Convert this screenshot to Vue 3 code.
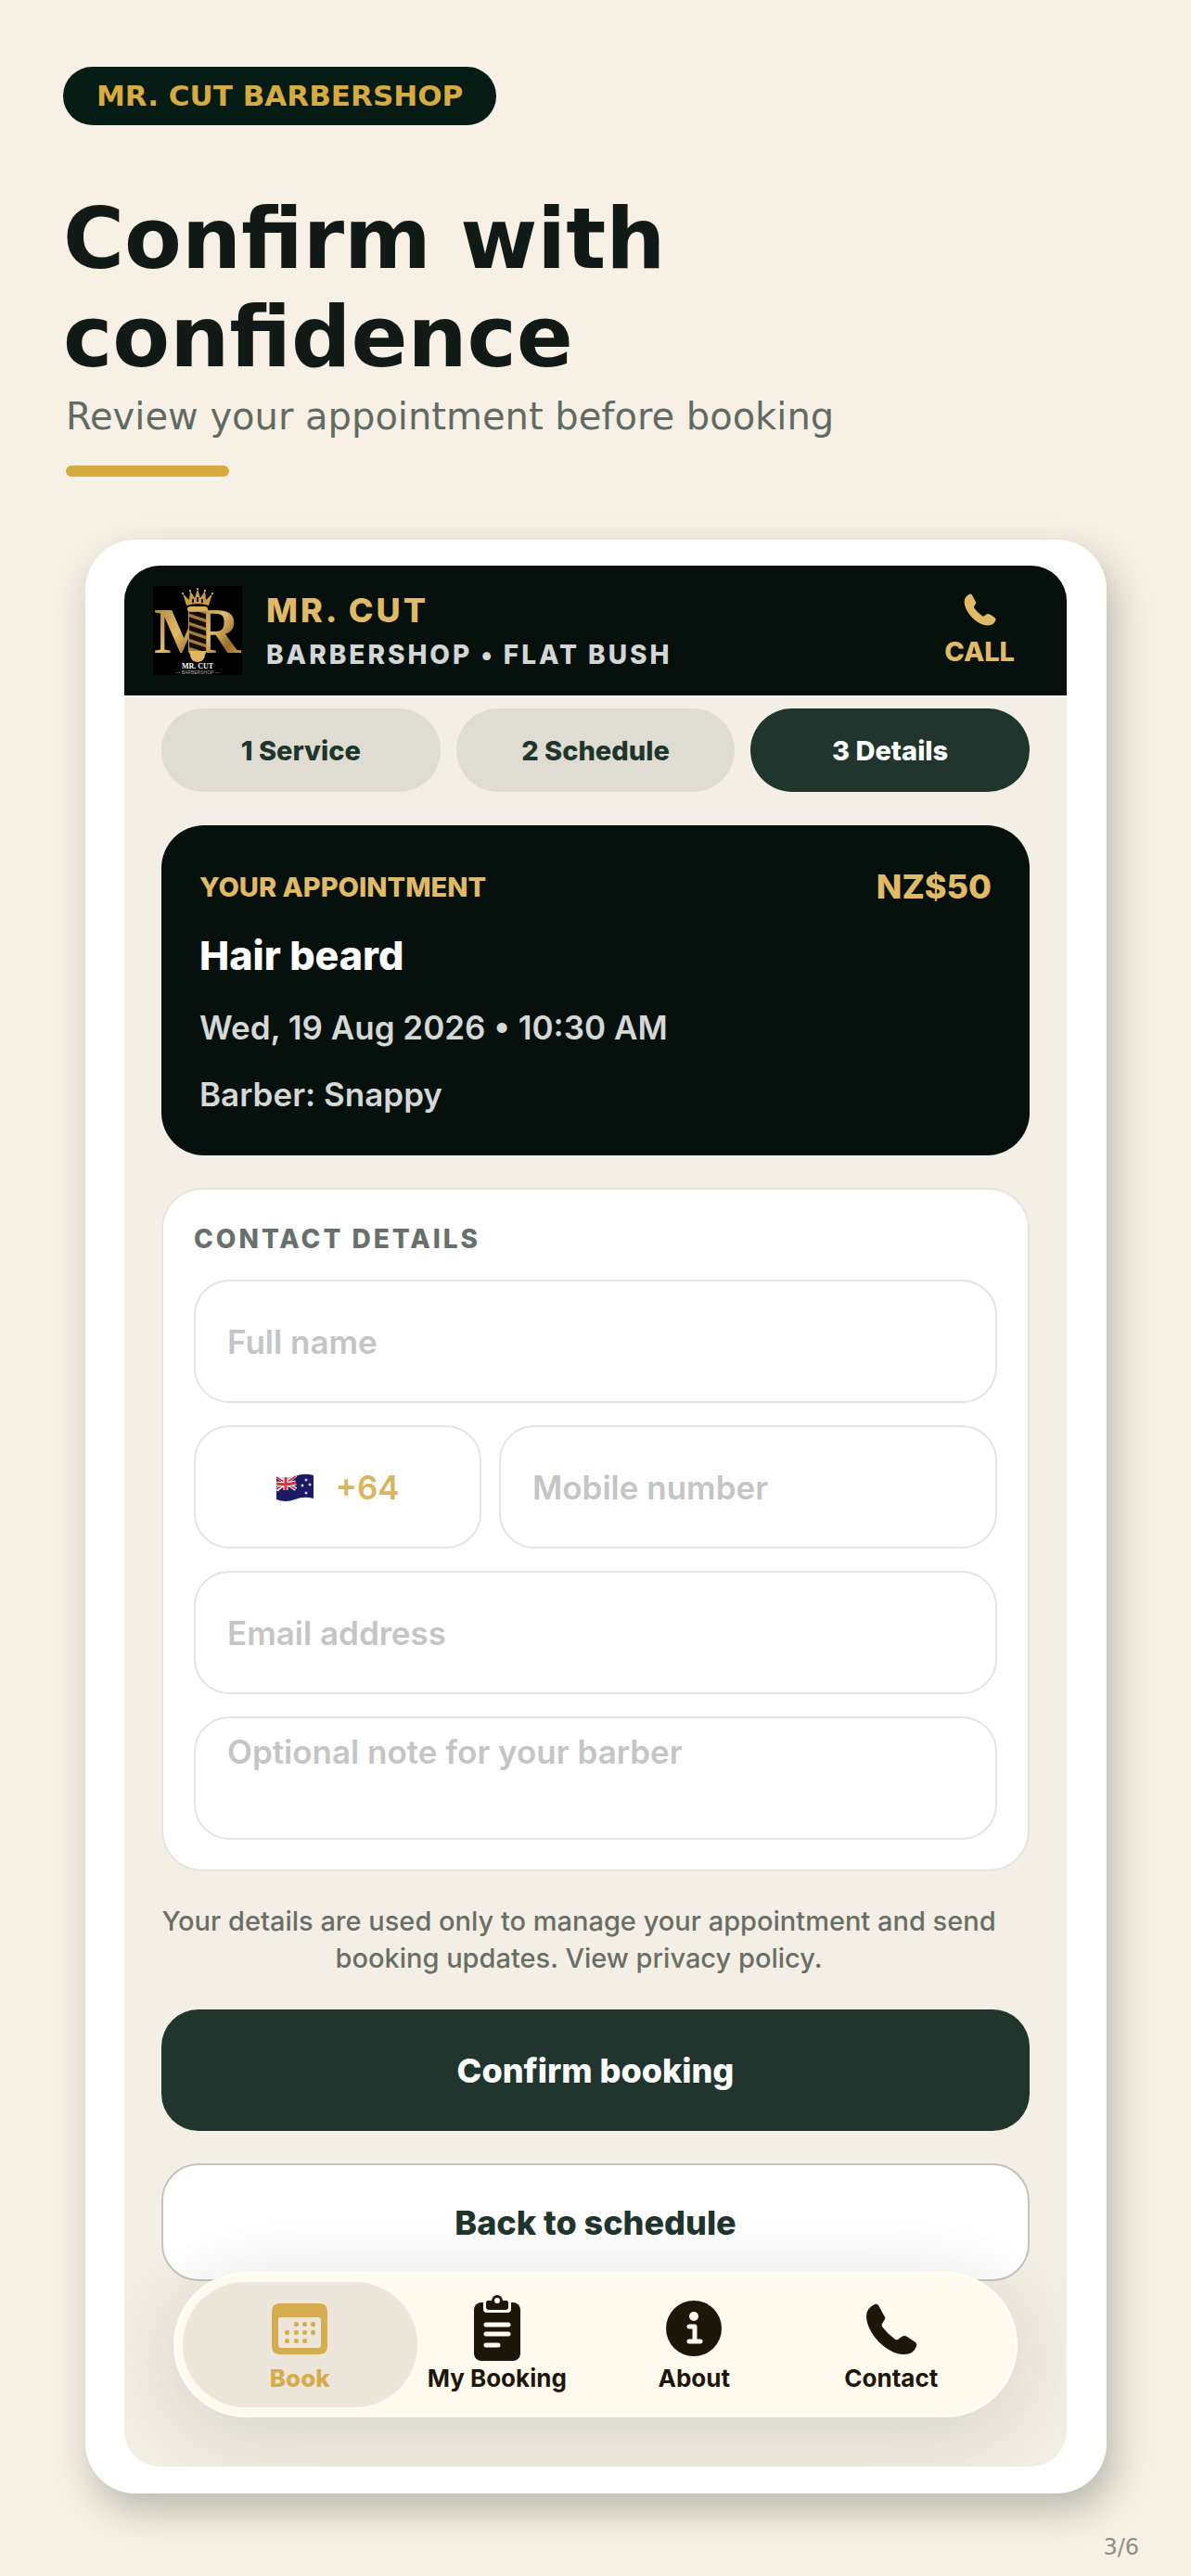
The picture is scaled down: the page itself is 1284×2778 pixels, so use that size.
<script setup>
import { ref } from 'vue';

// Booking progress
const steps = ['1 Service', '2 Schedule', '3 Details'];
const activeStep = ref('3 Details');

// Appointment summary
const appointment = {
  service: 'Hair beard',
  price: 'NZ$50',
  when: 'Wed, 19 Aug 2026 • 10:30 AM',
  barber: 'Snappy',
};

// Contact form
const fullName = ref('');
const mobile = ref('');
const email = ref('');
const note = ref('');

// Bottom tabs
const activeTab = ref('book');
const tabs = [
  { id: 'book', label: 'Book' },
  { id: 'bookings', label: 'My Booking' },
  { id: 'about', label: 'About' },
  { id: 'contact', label: 'Contact' },
];

// Dots of the calendar icon
const calendarDots = [
  [26, 23], [35, 23], [44, 23],
  [16, 32], [26, 32], [35, 32], [44, 32],
  [16, 41], [26, 41], [35, 41],
];
</script>

<template>
  <main class="page">
    <header class="intro">
      <p class="badge">MR. CUT BARBERSHOP</p>
      <h1 class="title">Confirm with<br />confidence</h1>
      <p class="subtitle">Review your appointment before booking</p>
      <div class="accent"></div>
    </header>

    <section class="frame">
      <div class="screen">
        <header class="topbar">
          <svg class="logo" viewBox="0 0 96 96" aria-hidden="true">
            <defs>
              <linearGradient id="gold" x1="0" y1="0" x2="1" y2="1">
                <stop offset="0" stop-color="#a87b33" />
                <stop offset="0.45" stop-color="#e0bb69" />
                <stop offset="0.7" stop-color="#9a6f2c" />
                <stop offset="1" stop-color="#dcae55" />
              </linearGradient>
              <clipPath id="left-half"><rect x="0" y="0" width="40" height="96" /></clipPath>
              <clipPath id="right-half"><rect x="58" y="0" width="38" height="96" /></clipPath>
              <clipPath id="pole"><rect x="39" y="28" width="18" height="42" /></clipPath>
            </defs>
            <rect width="96" height="96" fill="#000" />
            <g fill="url(#gold)" class="logo-letters">
              <text x="1" y="72" clip-path="url(#left-half)">M</text>
              <text x="44" y="72" clip-path="url(#right-half)">R</text>
            </g>
            <path d="M36 21 32 8l7 7 1-10 5 8 3-10 3 10 5-8 1 10 7-7-4 13q-12-4-24 0Z" fill="#c99c48" />
            <g fill="#efd28a">
              <circle cx="32" cy="8" r="1" /><circle cx="40" cy="5" r="1" /><circle cx="48" cy="3" r="1" />
              <circle cx="56" cy="5" r="1" /><circle cx="64" cy="8" r="1" />
            </g>
            <path d="M43 14v4M48 12v5M53 14v4" stroke="#1a1206" stroke-width="2" />
            <rect x="37" y="22" width="22" height="6" rx="3" fill="#d9ad59" />
            <rect x="38" y="27" width="20" height="44" fill="#c0913f" />
            <g clip-path="url(#pole)">
              <rect x="39" y="28" width="18" height="42" fill="#a57c3a" />
              <path d="m36 26 24 8m-24 1 24 8m-24 1 24 8m-24 1 24 8m-24 1 24 8" stroke="#120d05" stroke-width="5" />
            </g>
            <path d="M38 70h20l-2 4q0 7-8 8-8-1-8-8Z" fill="#e0b663" />
            <text x="48" y="89" class="logo-name">MR. CUT</text>
            <text x="48" y="95" class="logo-sub">— BARBERSHOP —</text>
          </svg>
          <div class="brand">
            <strong class="brand-name">MR. CUT</strong>
            <span class="brand-place">BARBERSHOP • FLAT BUSH</span>
          </div>
          <a class="call" href="#call">
            <svg class="call-icon" viewBox="0 0 56 56" aria-hidden="true">
              <path d="M10 1q-9 4-9 13C1 32 24 56 42 55q10 0 13-9 1-2-1-4L45 36q-3-2-6 0l-4 3q-2 1-4-1-8-6-13-13-1-2 0-3l3-5q1-2-1-4L14 2q-2-2-4-1Z" fill="currentColor" />
            </svg>
            CALL
          </a>
        </header>

        <div class="content">
          <nav class="steps" aria-label="Booking steps">
            <button
              v-for="step in steps"
              :key="step"
              type="button"
              class="step"
              :class="{ active: step === activeStep }"
              @click="activeStep = step"
            >
              {{ step }}
            </button>
          </nav>

          <article class="summary">
            <div class="summary-head">
              <h2 class="summary-label">YOUR APPOINTMENT</h2>
              <span class="price">{{ appointment.price }}</span>
            </div>
            <h3 class="service">{{ appointment.service }}</h3>
            <p class="summary-line">{{ appointment.when }}</p>
            <p class="summary-line">Barber: {{ appointment.barber }}</p>
          </article>

          <form class="contact" @submit.prevent>
            <h2 class="contact-title">CONTACT DETAILS</h2>
            <input v-model="fullName" class="field" type="text" aria-label="Full name" placeholder="Full name" />
            <div class="phone-row">
              <button type="button" class="field country" aria-label="Country code +64">
                <svg class="flag" viewBox="0 0 42 30" aria-hidden="true">
                  <path d="M1 3q10 4 20 0T41 2v25q-10-3-20 1T1 28Z" fill="#1b1c66" />
                  <path d="m1 3 21 14M1 18 22 2" stroke="#fff" stroke-width="4" />
                  <path d="m1 4 21 13M1 17 22 3" stroke="#d8303c" stroke-width="2" />
                  <path d="M11 4v14M1 11q10 2 21-1" stroke="#fff" stroke-width="5" fill="none" />
                  <path d="M11 4v14M1 11q10 2 21-1" stroke="#d8303c" stroke-width="3" fill="none" />
                  <g fill="#e06a78" stroke="#fff" stroke-width="1">
                    <circle cx="33" cy="7" r="1" /><circle cx="29" cy="13" r="1" />
                    <circle cx="37" cy="12" r="1" /><circle cx="33" cy="21" r="1" />
                  </g>
                </svg>
                +64
              </button>
              <input v-model="mobile" class="field" type="tel" aria-label="Mobile number" placeholder="Mobile number" />
            </div>
            <input v-model="email" class="field" type="email" aria-label="Email address" placeholder="Email address" />
            <textarea v-model="note" class="field note" aria-label="Optional note for your barber" placeholder="Optional note for your barber"></textarea>
          </form>

          <p class="privacy">
            Your details are used only to manage your appointment and send
            booking updates. <a href="#privacy">View privacy policy.</a>
          </p>

          <button type="button" class="action primary">Confirm booking</button>
          <button type="button" class="action secondary">Back to schedule</button>
        </div>

        <nav class="tabbar" aria-label="Main">
          <a
            v-for="tab in tabs"
            :key="tab.id"
            :href="'#' + tab.id"
            class="tab"
            :class="{ active: tab.id === activeTab }"
            @click="activeTab = tab.id"
          >
            <svg v-if="tab.id === 'book'" class="tab-icon" viewBox="0 0 60 72" aria-hidden="true">
              <path
                fill="currentColor"
                fill-rule="evenodd"
                d="M9 9h42q9 0 9 9v37q0 9-9 9H9q-9 0-9-9V18q0-9 9-9Zm1 15q-3 0-3 3v27q0 3 3 3h40q3 0 3-3V27q0-3-3-3Z"
              />
              <rect
                v-for="([x, y], i) in calendarDots"
                :key="i"
                :x="x - 2"
                :y="y + 6"
                width="5"
                height="5"
                rx="2"
                fill="currentColor"
              />
            </svg>
            <svg v-else-if="tab.id === 'bookings'" class="tab-icon" viewBox="0 0 60 72" aria-hidden="true">
              <rect x="5" y="8" width="50" height="63" rx="8" fill="currentColor" />
              <path d="M15 4h30v11q0 4-4 4H19q-4 0-4-4Z" fill="#fffaee" />
              <path d="M20 6h4q1-6 6-6t6 6h4q2 0 2 3v4q0 3-3 3H21q-3 0-3-3V9q0-3 2-3Z" fill="currentColor" />
              <circle cx="30" cy="6" r="3" fill="#fffaee" />
              <path d="M18 32h24M18 42h24M18 54h13" stroke="#fffaee" stroke-width="5" stroke-linecap="round" />
            </svg>
            <svg v-else-if="tab.id === 'about'" class="tab-icon" viewBox="0 0 60 72" aria-hidden="true">
              <circle cx="30" cy="36" r="30" fill="currentColor" />
              <circle cx="30" cy="23" r="5" fill="#fffaee" />
              <path d="M25 34h6v16M25 50h12" fill="none" stroke="#fffaee" stroke-width="5" stroke-linecap="round" stroke-linejoin="round" />
            </svg>
            <svg v-else class="tab-icon" viewBox="0 0 60 72" aria-hidden="true">
              <g transform="translate(2 9)">
                <path d="M10 1q-9 4-9 13C1 32 24 56 42 55q10 0 13-9 1-2-1-4L45 36q-3-2-6 0l-4 3q-2 1-4-1-8-6-13-13-1-2 0-3l3-5q1-2-1-4L14 2q-2-2-4-1Z" fill="currentColor" />
              </g>
            </svg>
            {{ tab.label }}
          </a>
        </nav>
      </div>
    </section>

    <footer class="pager">3/6</footer>
  </main>
</template>

<style>
body {
  margin: 0;
  background: #f7f0e4;
}
</style>

<style scoped>
* {
  box-sizing: border-box;
}

h1,
h2,
h3,
p {
  margin: 0;
}

button {
  cursor: pointer;
}

.page {
  display: flex;
  flex-direction: column;
  min-height: 100vh;
  background: #f7f0e4;
  font-family: 'DejaVu Sans', sans-serif;
}

/* Heading block */
.intro {
  display: flex;
  flex-direction: column;
  align-items: flex-start;
  padding: 72px 68px 68px;
}

.badge {
  padding: 0 36px;
  border-radius: 32px;
  background: #041c14;
  color: #d8aa42;
  font-size: 31px;
  font-weight: bold;
  line-height: 63px;
}

.title {
  margin-top: 70px;
  color: #121a17;
  font-size: 90px;
  font-weight: bold;
  line-height: 106px;
}

.subtitle {
  margin: 4px 0 0 3px;
  color: #626a64;
  font-size: 40px;
  line-height: 56px;
}

.accent {
  width: 176px;
  height: 12px;
  margin: 25px 0 0 3px;
  border-radius: 6px;
  background: #d8aa42;
}

/* Device frame */
.frame {
  margin: 0 91px 0 92px;
  padding: 28px 43px 29px 42px;
  border-radius: 54px;
  background: #fff;
  box-shadow: 8px 18px 40px rgba(4, 28, 20, 0.26);
}

.screen {
  position: relative;
  overflow: hidden;
  border-radius: 38px;
  background: #f4efe4;
  font-family: Inter, 'Liberation Sans', sans-serif;
}

.topbar {
  display: flex;
  align-items: center;
  gap: 26px;
  height: 142px;
  padding: 0 56px 0 31px;
  border-bottom: 2px solid #fff;
  background: #06100c;
}

.logo {
  flex: none;
  width: 96px;
  height: 96px;
}

.logo-letters {
  font-family: 'Liberation Serif', serif;
  font-size: 70px;
  font-weight: bold;
}

.logo-name {
  fill: #fff;
  font-family: 'Liberation Serif', serif;
  font-size: 8px;
  font-weight: bold;
  text-anchor: middle;
}

.logo-sub {
  fill: #aaa;
  font-family: 'Liberation Sans', sans-serif;
  font-size: 5px;
  text-anchor: middle;
}

.brand {
  display: flex;
  flex: 1;
  flex-direction: column;
  gap: 6px;
  padding-top: 2px;
}

.brand-name {
  color: #e0ba66;
  font-size: 36px;
  font-weight: 800;
  line-height: 44px;
  letter-spacing: 3px;
}

.brand-place {
  color: #d3d6d5;
  font-size: 28px;
  font-weight: 800;
  line-height: 40px;
  letter-spacing: 3px;
}

.call {
  display: flex;
  flex-direction: column;
  align-items: center;
  gap: 10px;
  color: #e0ba66;
  font-size: 29px;
  font-weight: 800;
  line-height: 36px;
  text-decoration: none;
}

.call-icon {
  width: 35px;
  height: 35px;
}

.content {
  display: flex;
  flex-direction: column;
  padding: 12px 40px 200px;
}

.steps {
  display: grid;
  grid-template-columns: repeat(3, 1fr);
  gap: 17px;
}

.step {
  height: 90px;
  padding: 0;
  border: none;
  border-radius: 45px;
  background: #dfddd1;
  color: #20352d;
  font-family: inherit;
  font-size: 29px;
  font-weight: 800;
}

.step.active {
  background: #1f352d;
  color: #fff;
}

.summary {
  margin-top: 36px;
  padding: 44px 41px;
  border-radius: 46px;
  background: #06100c;
}

.summary-head {
  display: flex;
  align-items: center;
  justify-content: space-between;
  height: 44px;
  color: #e0ba66;
}

.summary-label {
  font-size: 29px;
  font-weight: 800;
}

.price {
  font-size: 36px;
  font-weight: 800;
}

.service {
  margin-top: 24px;
  color: #fff;
  font-size: 43px;
  font-weight: 800;
  line-height: 56px;
}

.summary-line {
  margin-top: 28px;
  color: #d5d8d6;
  font-size: 35px;
  font-weight: 600;
  line-height: 44px;
}

.contact {
  display: flex;
  flex-direction: column;
  gap: 24px;
  margin-top: 35px;
  padding: 33px 33px 32px;
  border: 2px solid #e7e4de;
  border-radius: 44px;
  background: #fff;
}

.contact-title {
  color: #68706c;
  font-size: 28px;
  font-weight: 800;
  line-height: 40px;
  letter-spacing: 3px;
}

.field {
  width: 100%;
  min-width: 0;
  height: 133px;
  padding: 0 34px;
  border: 2px solid #e4e4e4;
  border-radius: 38px;
  outline: none;
  background: #fff;
  color: #121a17;
  font-family: inherit;
  font-size: 35px;
  font-weight: 600;
  line-height: 44px;
}

.field::placeholder {
  color: #c5c5c6;
  opacity: 1;
}

.note {
  display: block;
  padding-top: 14px;
  resize: none;
}

.phone-row {
  display: grid;
  grid-template-columns: 310fr 537fr;
  gap: 19px;
}

.country {
  display: flex;
  align-items: center;
  justify-content: center;
  gap: 22px;
  color: #d9b560;
}

.flag {
  width: 42px;
  height: 30px;
}

.privacy {
  margin: 34px 36px 0 0;
  color: #696e67;
  font-size: 29px;
  font-weight: 500;
  line-height: 40px;
  text-align: center;
}

.privacy a {
  color: inherit;
  text-decoration: none;
}

.action {
  height: 131px;
  border: none;
  border-radius: 40px;
  font-family: inherit;
  font-size: 36px;
  font-weight: 800;
}

.primary {
  margin-top: 35px;
  background: #1f352d;
  color: #fff;
}

.secondary {
  height: 127px;
  margin-top: 35px;
  border: 2px solid #c3c4bf;
  background: #fff;
  color: #20352d;
}

/* Floating tab bar */
.tabbar {
  position: absolute;
  right: 53px;
  bottom: 53px;
  left: 53px;
  display: grid;
  grid-template-columns: repeat(4, 1fr);
  height: 157px;
  padding: 8px 27px;
  border: 3px solid #fffdf6;
  border-radius: 79px;
  background: #fffaee;
  box-shadow: 0 16px 90px rgba(10, 30, 20, 0.14);
}

.tab {
  display: flex;
  flex-direction: column;
  align-items: center;
  justify-content: center;
  margin: 0 -20px;
  border-radius: 68px;
  color: #1d160a;
  font-size: 26px;
  font-weight: 700;
  line-height: 36px;
  text-decoration: none;
}

.tab.active {
  background: #ede6da;
  color: #d6ac50;
  font-weight: 800;
}

.tab-icon {
  width: 60px;
  height: 72px;
}

.pager {
  padding: 44px 56px 16px 0;
  color: #8d8f89;
  font-size: 24px;
  line-height: 28px;
  text-align: right;
}
</style>
